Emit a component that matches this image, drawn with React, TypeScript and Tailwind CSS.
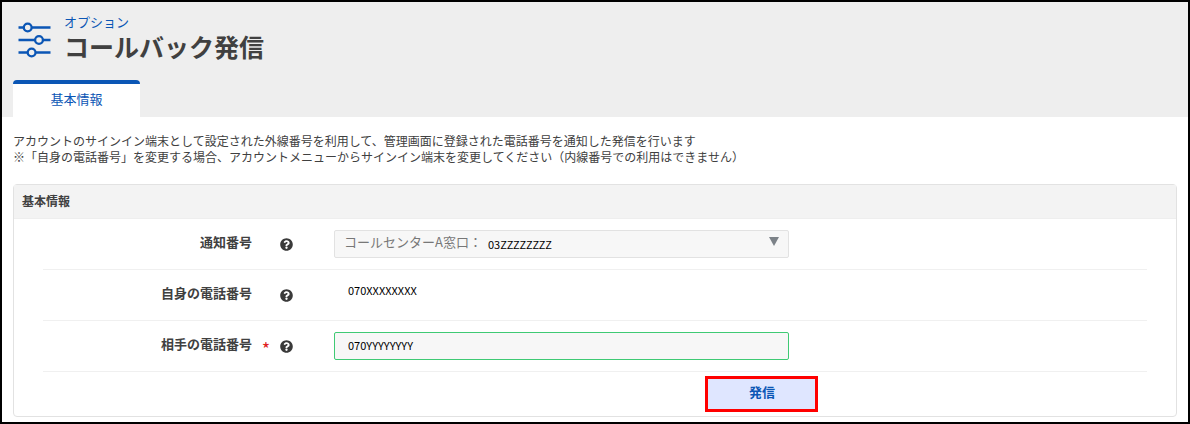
import type { ReactNode } from "react";
import { FaQuestionCircle } from "react-icons/fa";

const numberText = "text-[11px] leading-4 text-black";

function SlidersLogo() {
  return (
    <svg viewBox="0 0 34 36" className="mt-0.5 h-9 w-[34px] shrink-0" fill="none" stroke="#0b56b5" strokeWidth="2.3" aria-hidden="true">
      <path d="M0.500 5.500h5.500M13.500 5.500h19M0.500 18h16.500M25 18h7.500M0.500 30.500h9.500M17.500 30.500h15" />
      <circle cx="9.700" cy="5.500" r="3.900" />
      <circle cx="21" cy="18" r="3.900" />
      <circle cx="13.600" cy="30.500" r="3.900" />
    </svg>
  );
}

type RowProps = {
  label: string;
  htmlFor: string;
  required?: boolean;
  children: ReactNode;
};

function Row({ label, htmlFor, required, children }: RowProps) {
  return (
    <div className="flex h-[51px] items-center border-b border-[#f0f0f0]">
      <label htmlFor={htmlFor} className="w-[209px] shrink-0 pb-1 text-right text-[13px] leading-5 font-bold text-[#404040]">
        {label}
      </label>
      <span className="w-7 shrink-0 pt-1 text-center text-lg leading-4 text-[#e02020]">{required ? "*" : ""}</span>
      <button type="button" aria-label={label + "のヘルプ"} className="mr-[41px] shrink-0 text-[#3a3a3a]">
        <FaQuestionCircle size={13} />
      </button>
      {children}
    </div>
  );
}

export default function App() {
  return (
    <div className="min-h-screen border-2 border-black bg-white font-['Noto_Sans_CJK_JP',sans-serif] text-[#404040]">
      <header className="bg-[#eeeeee] pt-3 pl-[11px]">
        <div className="flex items-center gap-3 pl-[5px] font-['Liberation_Sans','Noto_Sans_CJK_JP',sans-serif]">
          <SlidersLogo />
          <div>
            <p className="text-[13px] leading-[18px] text-[#0b56b5]">オプション</p>
            <h1 className="text-[25px] leading-8 font-bold">コールバック発信</h1>
          </div>
        </div>
        <nav className="mt-4 flex">
          <a
            href="#basic"
            className="flex h-[37px] w-[127px] items-center justify-center rounded-t-sm border-t-4 border-[#0b56b5] bg-white pb-1 text-[13px] text-[#0b56b5]"
          >
            基本情報
          </a>
        </nav>
      </header>

      <main id="basic" className="px-[11px] pt-4 pb-[5px]">
        <p className="text-xs leading-4">
          アカウントのサインイン端末として設定された外線番号を利用して、管理画面に登録された電話番号を通知した発信を行います
          <br />
          ※「自身の電話番号」を変更する場合、アカウントメニューからサインイン端末を変更してください（内線番号での利用はできません）
        </p>

        <form className="mt-[19px] rounded-sm border border-[#e2e2e2]">
          <h2 className="flex h-[34px] items-center border-b border-[#eeeeee] bg-[#f3f3f3] px-2 pb-0.5 text-xs font-bold">基本情報</h2>
          <div className="px-[29px]">
            <Row label="通知番号" htmlFor="caller">
              <div className="relative h-7 w-full max-w-[455px]">
                <select
                  id="caller"
                  className="block h-full w-full appearance-none rounded-xs border border-[#e2e2e2] bg-[#f7f7f7] px-[9px] pb-1 text-[13px] text-[#777777]"
                >
                  <option>コールセンターA窓口：</option>
                </select>
                <span className={"pointer-events-none absolute top-1.5 left-[154px] " + numberText}>03ZZZZZZZZ</span>
                <svg viewBox="0 0 10 9" className="pointer-events-none absolute top-[7px] right-2.5 h-[9px] w-2.5 fill-[#7c8288]" aria-hidden="true">
                  <path d="M0 0h10L5 9z" />
                </svg>
              </div>
            </Row>
            <Row label="自身の電話番号" htmlFor="own">
              <output id="own" className={"px-3.5 pb-2.5 " + numberText}>
                070XXXXXXXX
              </output>
            </Row>
            <Row label="相手の電話番号" htmlFor="peer" required>
              <input
                id="peer"
                type="tel"
                defaultValue="070YYYYYYYY"
                className={"h-7 w-full max-w-[455px] rounded-xs border border-[#3fca74] bg-[#f7f7f7] px-[13px] pb-0.5 " + numberText}
              />
            </Row>
            <div className="flex py-1">
              <button
                type="button"
                className="ml-[60%] h-9 w-[113px] border-3 border-[#ff0000] bg-[#dfe6ff] pb-1 text-[13px] font-bold text-[#0b56b5]"
              >
                発信
              </button>
            </div>
          </div>
        </form>
      </main>
    </div>
  );
}
